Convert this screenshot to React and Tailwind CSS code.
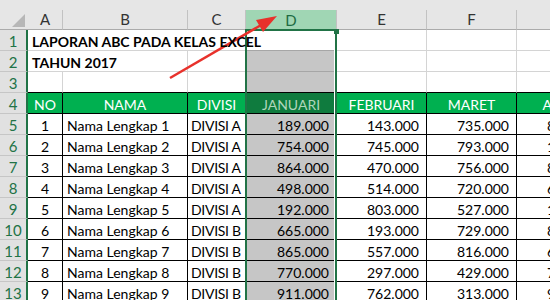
import React from "react";

const jan = ["189.000","754.000","864.000","498.000","192.000","665.000","865.000","770.000","911.000"];
const feb = ["143.000","745.000","470.000","514.000","803.000","193.000","557.000","297.000","762.000"];
const mar = ["735.000","793.000","756.000","720.000","527.000","729.000","816.000","429.000","313.000"];
const apr = ["856.000","123.000","845.000","612.000","178.000","834.000","645.000","712.000","956.000"];

function RowHdr({ n }) {
  return (
    <div className="w-[28px] h-[21px] shrink-0 bg-[#e1e1e1] border-b border-b-[#c6c6c6] border-r-2 border-r-[#217346] flex items-center justify-center pt-[2px] text-[15px] text-[#217346]">
      {n}
    </div>
  );
}

function ColHdr({ w, label, active }) {
  return (
    <div className={`${w} h-[30px] shrink-0 flex flex-col justify-end`}>
      <div
        className={
          active
            ? "h-[20px] bg-[#a0d6b4] border-r border-r-[#c2c2c2] flex items-center justify-center text-[15px] text-[#1d6b42]"
            : "h-[20px] border-r border-r-[#c2c2c2] border-b border-b-[#ababab] flex items-center justify-center text-[15px] text-[#333]"
        }
      >
        {label}
      </div>
    </div>
  );
}

const dataCell = "h-[21px] shrink-0 border-r border-b border-black flex items-center pt-[2px] text-[14px] text-black";

export default function App() {
  return (
    <div className="relative w-[550px] h-[300px] overflow-hidden bg-white font-['Lato',sans-serif]">
      {/* column header */}
      <div className="flex h-[30px] w-[700px] bg-[#e6e6e6]">
        <div className="w-[28px] h-[30px] shrink-0 relative border-b border-b-[#ababab]">
          <svg width="28" height="30" className="absolute left-0 top-0">
            <polygon points="12,27 25,27 25,14" fill="#b7b7b7" />
          </svg>
        </div>
        <ColHdr w="w-[35px]" label="A" />
        <ColHdr w="w-[125px]" label="B" />
        <ColHdr w="w-[58px]" label="C" />
        <ColHdr w="w-[91px]" label="D" active />
        <ColHdr w="w-[90px]" label="E" />
        <ColHdr w="w-[90px]" label="F" />
        <ColHdr w="w-[90px]" label="G" />
      </div>

      {/* row 1 */}
      <div className="flex h-[21px] w-[700px]">
        <RowHdr n={1} />
        <div className="w-[35px] h-[21px] shrink-0 border-b border-b-[#d4d4d4] flex items-center pl-[4px] pt-[2px]">
          <span className="relative z-10 whitespace-nowrap font-bold text-[14px] text-black">LAPORAN ABC PADA KELAS EXCEL</span>
        </div>
        <div className="w-[125px] h-[21px] shrink-0 border-b border-b-[#d4d4d4]" />
        <div className="w-[58px] h-[21px] shrink-0 border-b border-b-[#d4d4d4]" />
        <div className="w-[91px] h-[21px] shrink-0 bg-white border-b border-b-[#a6a6a6]" />
        <div className="w-[90px] h-[21px] shrink-0 border-r border-b border-[#d4d4d4]" />
        <div className="w-[90px] h-[21px] shrink-0 border-r border-b border-[#d4d4d4]" />
        <div className="w-[90px] h-[21px] shrink-0 border-r border-b border-[#d4d4d4]" />
      </div>

      {/* row 2 */}
      <div className="flex h-[21px] w-[700px]">
        <RowHdr n={2} />
        <div className="w-[35px] h-[21px] shrink-0 border-b border-b-[#d4d4d4] flex items-center pl-[4px] pt-[2px]">
          <span className="relative z-10 whitespace-nowrap font-bold text-[14px] text-black">TAHUN 2017</span>
        </div>
        <div className="w-[125px] h-[21px] shrink-0 border-r border-b border-[#d4d4d4]" />
        <div className="w-[58px] h-[21px] shrink-0 border-r border-b border-[#d4d4d4]" />
        <div className="w-[91px] h-[21px] shrink-0 bg-[#c6c6c6] border-b border-b-[#a6a6a6]" />
        <div className="w-[90px] h-[21px] shrink-0 border-r border-b border-[#d4d4d4]" />
        <div className="w-[90px] h-[21px] shrink-0 border-r border-b border-[#d4d4d4]" />
        <div className="w-[90px] h-[21px] shrink-0 border-r border-b border-[#d4d4d4]" />
      </div>

      {/* row 3 */}
      <div className="flex h-[21px] w-[700px]">
        <RowHdr n={3} />
        <div className="w-[35px] h-[21px] shrink-0 border-r border-r-[#d4d4d4] border-b border-b-black" />
        <div className="w-[125px] h-[21px] shrink-0 border-r border-r-[#d4d4d4] border-b border-b-black" />
        <div className="w-[58px] h-[21px] shrink-0 border-r border-r-[#d4d4d4] border-b border-b-black" />
        <div className="w-[91px] h-[21px] shrink-0 bg-[#c6c6c6] border-b border-b-black" />
        <div className="w-[90px] h-[21px] shrink-0 border-r border-r-[#d4d4d4] border-b border-b-black" />
        <div className="w-[90px] h-[21px] shrink-0 border-r border-r-[#d4d4d4] border-b border-b-black" />
        <div className="w-[90px] h-[21px] shrink-0 border-r border-r-[#d4d4d4] border-b border-b-black" />
      </div>

      {/* row 4 header */}
      <div className="flex h-[21px] w-[700px]">
        <RowHdr n={4} />
        <div className={`w-[35px] ${dataCell} justify-center bg-[#00b050] !text-white`}>NO</div>
        <div className={`w-[125px] ${dataCell} justify-center bg-[#00b050] !text-white`}>NAMA</div>
        <div className={`w-[58px] ${dataCell} justify-center bg-[#00b050] !text-white`}>DIVISI</div>
        <div className={`w-[91px] ${dataCell} justify-center bg-[#0f7b3e] !text-[#aed6bc]`}>JANUARI</div>
        <div className={`w-[90px] ${dataCell} justify-center bg-[#00b050] !text-white`}>FEBRUARI</div>
        <div className={`w-[90px] ${dataCell} justify-center bg-[#00b050] !text-white`}>MARET</div>
        <div className={`w-[90px] ${dataCell} justify-center bg-[#00b050] !text-white`}>APRIL</div>
      </div>

      {jan.map((j, i) => (
        <div key={i} className="flex h-[21px] w-[700px]">
          <RowHdr n={i + 5} />
          <div className={`w-[35px] ${dataCell} justify-center`}>{i + 1}</div>
          <div className={`w-[125px] ${dataCell} pl-[4px]`}>Nama Lengkap {i + 1}</div>
          <div className={`w-[58px] ${dataCell} pl-[3px] whitespace-nowrap tracking-[-0.3px]`}>{i < 5 ? "DIVISI A" : "DIVISI B"}</div>
          <div className={`w-[91px] ${dataCell} justify-end pr-[7px] bg-[#c6c6c6]`}>{j}</div>
          <div className={`w-[90px] ${dataCell} justify-end pr-[7px]`}>{feb[i]}</div>
          <div className={`w-[90px] ${dataCell} justify-end pr-[7px]`}>{mar[i]}</div>
          <div className={`w-[90px] ${dataCell} justify-end pr-[7px]`}>{apr[i]}</div>
        </div>
      ))}

      {/* selection overlay */}
      <div className="absolute left-[245px] top-[29px] w-[92px] h-[300px] border-2 border-[#217346] pointer-events-none">
        <div className="absolute right-0 top-0 w-px h-full bg-white" />
      </div>
      <div className="absolute left-[334px] top-[29px] w-[5px] h-[5px] bg-[#217346]" />

      {/* red arrow */}
      <svg className="absolute left-0 top-0 pointer-events-none" width="550" height="300">
        <line x1="170" y1="78" x2="262" y2="24.5" stroke="#e8312b" strokeWidth="2.5" />
        <polygon points="277,16 263,32 256,20" fill="#e8312b" />
      </svg>
    </div>
  );
}
